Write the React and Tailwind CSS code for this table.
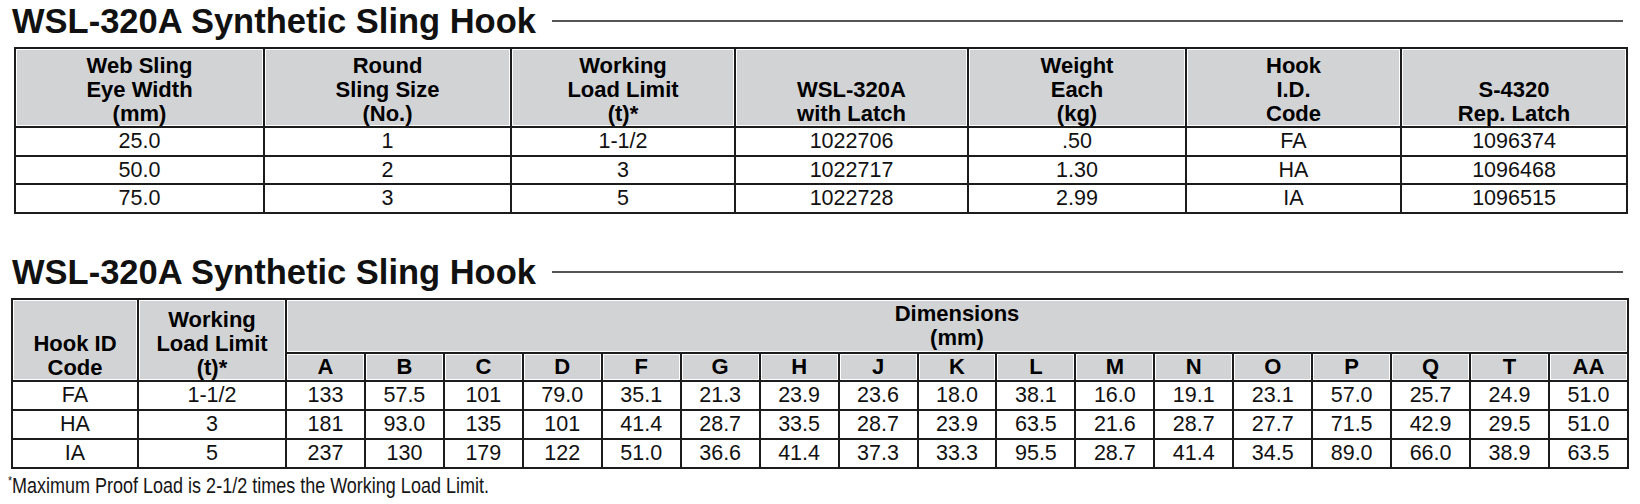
import React from 'react';

const t1Head = [
  ['Web Sling', 'Eye Width', '(mm)'],
  ['Round', 'Sling Size', '(No.)'],
  ['Working', 'Load Limit', '(t)*'],
  ['WSL-320A', 'with Latch'],
  ['Weight', 'Each', '(kg)'],
  ['Hook', 'I.D.', 'Code'],
  ['S-4320', 'Rep. Latch'],
];
const t1Widths = [249, 247, 224, 233, 218, 215, 226];
const t1Rows = [
  ['25.0', '1', '1-1/2', '1022706', '.50', 'FA', '1096374'],
  ['50.0', '2', '3', '1022717', '1.30', 'HA', '1096468'],
  ['75.0', '3', '5', '1022728', '2.99', 'IA', '1096515'],
];

const dims = ['A', 'B', 'C', 'D', 'F', 'G', 'H', 'J', 'K', 'L', 'M', 'N', 'O', 'P', 'Q', 'T', 'AA'];
const t2Rows = [
  ['FA', '1-1/2', '133', '57.5', '101', '79.0', '35.1', '21.3', '23.9', '23.6', '18.0', '38.1', '16.0', '19.1', '23.1', '57.0', '25.7', '24.9', '51.0'],
  ['HA', '3', '181', '93.0', '135', '101', '41.4', '28.7', '33.5', '28.7', '23.9', '63.5', '21.6', '28.7', '27.7', '71.5', '42.9', '29.5', '51.0'],
  ['IA', '5', '237', '130', '179', '122', '51.0', '36.6', '41.4', '37.3', '33.3', '95.5', '28.7', '41.4', '34.5', '89.0', '66.0', '38.9', '63.5'],
];

const headCell = 'border-2 border-[#1c1c1c] bg-[#d2d3d5] shadow-[inset_0_0_0_1px_#ffffff] font-bold text-black text-center text-[22px] leading-[24px] p-0';
const bodyCell = 'border-2 border-[#1c1c1c] text-center text-[#111] text-[21.5px] leading-[24px] p-0';

const Title = () => (
  <div className="flex items-center pl-3 pr-[17px]">
    <h2 className="text-[34.5px] leading-[34px] font-bold text-[#111] whitespace-nowrap">
      WSL-320A Synthetic Sling Hook
    </h2>
    <div className="ml-4 h-[2px] flex-1 bg-[#555]" />
  </div>
);

const Lines = ({ lines }) => lines.map((l, i) => <div key={i}>{l}</div>);

export default function App() {
  return (
    <div className="w-[1640px] h-[504px] overflow-hidden bg-white pt-1 font-['Liberation_Sans',Arial,sans-serif]">
      <Title />

      <table className="ml-[14px] mt-[9px] w-[1612px] table-fixed border-collapse">
        <colgroup>
          {t1Widths.map((w, i) => (
            <col key={i} style={{ width: w }} />
          ))}
        </colgroup>
        <thead>
          <tr className="h-[79px]">
            {t1Head.map((h, i) => (
              <th key={i} className={`${headCell} align-bottom`}>
                <Lines lines={h} />
              </th>
            ))}
          </tr>
        </thead>
        <tbody>
          {t1Rows.map((r, i) => (
            <tr key={i} className="h-[28.5px]">
              {r.map((c, j) => (
                <td key={j} className={bodyCell}>{c}</td>
              ))}
            </tr>
          ))}
        </tbody>
      </table>

      <div className="mt-[41px]">
        <Title />
      </div>

      <table className="ml-[11px] mt-[9px] w-[1618px] table-fixed border-collapse">
        <colgroup>
          <col className="w-[126px]" />
          <col className="w-[148px]" />
          {dims.map((d) => (
            <col key={d} />
          ))}
        </colgroup>
        <thead>
          <tr className="h-[54px]">
            <th rowSpan={2} className={`${headCell} align-bottom`}>
              <Lines lines={['Hook ID', 'Code']} />
            </th>
            <th rowSpan={2} className={`${headCell} align-bottom`}>
              <Lines lines={['Working', 'Load Limit', '(t)*']} />
            </th>
            <th colSpan={17} className={`${headCell} align-middle`}>
              <Lines lines={['Dimensions', '(mm)']} />
            </th>
          </tr>
          <tr className="h-[28px]">
            {dims.map((d) => (
              <th key={d} className={headCell}>{d}</th>
            ))}
          </tr>
        </thead>
        <tbody>
          {t2Rows.map((r, i) => (
            <tr key={i} className="h-[29px]">
              {r.map((c, j) => (
                <td key={j} className={bodyCell}>{c}</td>
              ))}
            </tr>
          ))}
        </tbody>
      </table>

      <p className="ml-2 mt-[5px] origin-left scale-x-[0.8] whitespace-nowrap text-[22.5px] leading-[24px] text-[#151515]">
        <span className="align-top text-[13px] leading-none">*</span>Maximum Proof Load is 2-1/2 times the Working Load Limit.
      </p>
    </div>
  );
}
